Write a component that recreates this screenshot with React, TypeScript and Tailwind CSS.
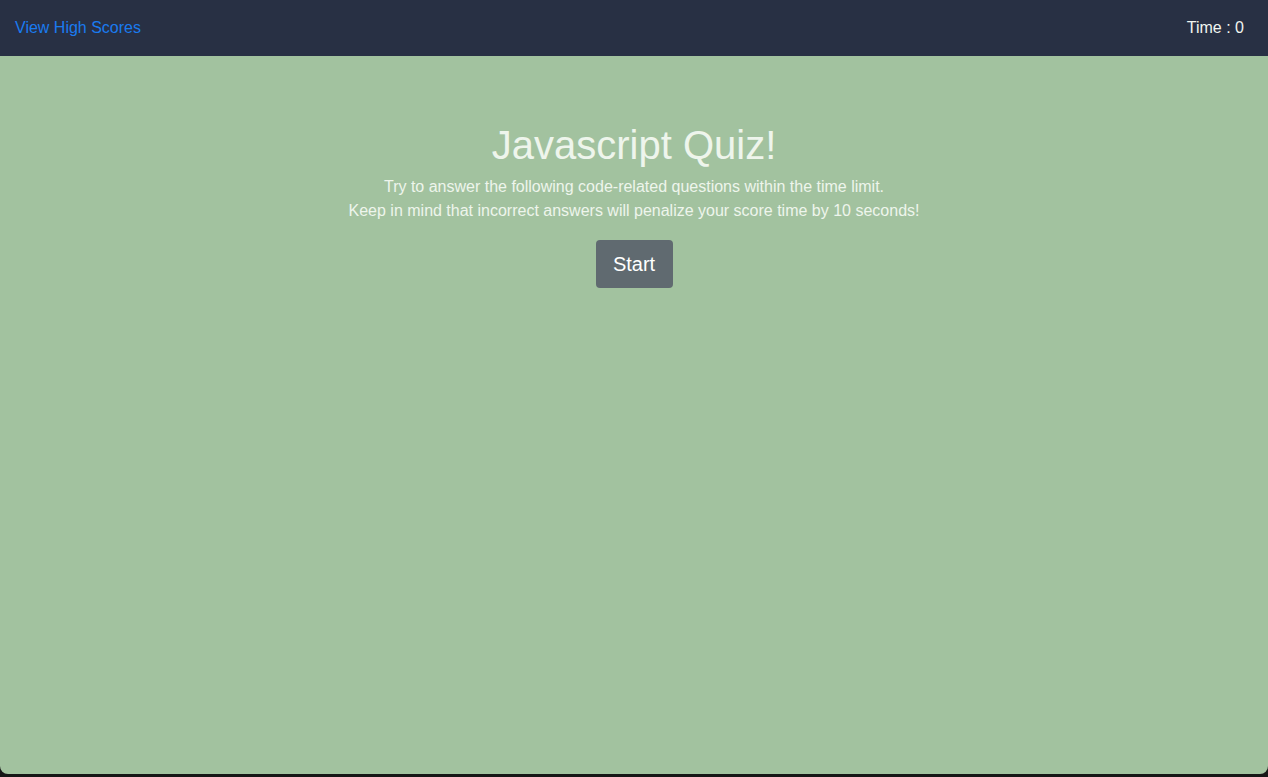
export default function App() {
  return (
    <div className="h-[777px] w-[1268px] overflow-hidden bg-[#161616] font-['Liberation_Sans',Arial,sans-serif]">
      <div className="flex h-[774px] flex-col overflow-hidden rounded-b-[8px] bg-[#a2c29f]">
        {/* nav */}
        <nav className="flex h-[56px] shrink-0 items-center justify-between bg-[#283044] pl-[15px] pr-[24px] text-[16px]">
          <a className="text-[#1a7bf0]" href="#">
            View High Scores
          </a>
          <span className="text-[#f1f5f0]">Time : 0</span>
        </nav>

        {/* intro */}
        <main className="flex flex-col items-center pt-[65px] text-center text-[#eef5ec]">
          <h1 className="text-[40px] leading-[48px] font-light">Javascript Quiz!</h1>
          <p className="mt-[6px] text-[16px] leading-[24px]">
            Try to answer the following code-related questions within the time limit.
            <br />
            Keep in mind that incorrect answers will penalize your score time by 10 seconds!
          </p>
          <button className="mt-[17px] h-[48px] w-[77px] rounded-[4px] bg-[#606a70] text-[20px] text-white">
            Start
          </button>
        </main>
      </div>
    </div>
  );
}
